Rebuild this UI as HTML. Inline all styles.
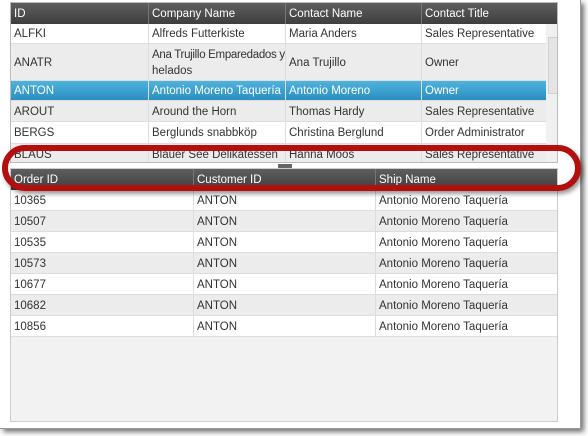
<!DOCTYPE html><html><head><style>
body{margin:0;width:588px;height:436px;background:#fff;font-family:"Liberation Sans",sans-serif;font-size:11.5px;color:#333;position:relative;overflow:hidden}
.frame{position:absolute;left:0;top:0;width:580px;height:428px;background:#fff;box-shadow:3px 3px 5px rgba(0,0,0,.55);border-right:1px solid #999;border-bottom:1px solid #999}
.a{position:absolute}
.hd{background:linear-gradient(#5e5e5e,#3e3e3e);color:#fff;height:21px}
.c{position:absolute;top:0;bottom:0;padding-left:3px;padding-top:1px;display:flex;align-items:center;border-left:1px solid #ddd;box-sizing:border-box;overflow:hidden;white-space:nowrap}
.hd .c{border-left:1px solid #777}
.r{position:absolute;left:0;border-bottom:1px solid #ddd;box-sizing:border-box}
</style></head><body>
<div class="frame"></div>
<div class="a" style="left:10px;top:2px;width:548px;height:161px;overflow:hidden;background:#fff;border:1px solid #bbb;box-sizing:border-box">
 <div class="a hd" style="left:0;top:0;width:548px">
  <div class="c" style="left:0;width:137px;border:0">ID</div><div class="c" style="left:137px;width:137px">Company Name</div><div class="c" style="left:274px;width:136px">Contact Name</div><div class="c" style="left:410px;width:138px">Contact Title</div>
 </div>
 <div id="rows"></div>
 <div class="a" style="left:535px;top:21px;width:13px;height:140px;background:#f0f0f0"><div class="a" style="left:2px;top:13px;width:9px;height:55px;background:#e4e4e4;border:1px solid #d0d0d0"></div></div>
</div>
<div class="a" style="left:278px;top:164px;width:14px;height:4px;background:#666"></div>
<div class="a" style="left:10px;top:168px;width:548px;height:254px;background:#f2f2f2;border:1px solid #ccc;box-sizing:border-box;overflow:hidden">
 <div class="a hd" style="left:0;top:0;width:548px">
  <div class="c" style="left:0;width:182px;border:0">Order ID</div><div class="c" style="left:182px;width:182px">Customer ID</div><div class="c" style="left:364px;width:184px">Ship Name</div>
 </div>
 <div id="rows2"></div>
</div>
<div class="a" style="left:2px;top:145px;width:579px;height:46px;border:6px solid #b40f0f;border-radius:23px;box-sizing:border-box;box-shadow:2px 3px 4px rgba(0,0,0,.4)"></div>
<script>
var d=[["ALFKI","Alfreds Futterkiste","Maria Anders","Sales Representative",20,"#fff"],["ANATR","<span style='letter-spacing:-0.3px'>Ana Trujillo Emparedados y</span><br>helados","Ana Trujillo","Owner",37,"#ececec"],["ANTON","Antonio Moreno Taquería","Antonio Moreno","Owner",20,"sel"],["AROUT","Around the Horn","Thomas Hardy","Sales Representative",21,"#ececec"],["BERGS","Berglunds snabbköp","Christina Berglund","Order Administrator",22,"#fff"],["BLAUS","Blauer See Delikatessen","Hanna Moos","Sales Representative",21,"#ececec"]];
var y=21,h="",L=[0,137,274,410],W=[137,137,136,125];
d.forEach(function(r){var bg=r[5]=="sel"?"linear-gradient(#4fb3dc,#2a8fc0)":r[5];var col=r[5]=="sel"?"#fff":"#333";
h+='<div class="r" style="top:'+y+'px;height:'+r[4]+'px;width:535px;background:'+bg+';color:'+col+'">';
for(var i=0;i<4;i++)h+='<div class="c" style="left:'+L[i]+'px;width:'+W[i]+'px;'+(i==0?'border:0':'')+';line-height:16px"><div>'+r[i]+'</div></div>';
h+='</div>';y+=r[4];});
document.getElementById("rows").innerHTML=h;
var o=["10365","10507","10535","10573","10677","10682","10856"];h="";y=21;
o.forEach(function(n,k){h+='<div class="r" style="top:'+y+'px;height:21px;width:548px;background:'+(k%2?'#ececec':'#fff')+'"><div class="c" style="left:0;width:182px;border:0">'+n+'</div><div class="c" style="left:182px;width:182px">ANTON</div><div class="c" style="left:364px;width:184px">Antonio Moreno Taquería</div></div>';y+=21;});
document.getElementById("rows2").innerHTML=h;
</script>
</body></html>
